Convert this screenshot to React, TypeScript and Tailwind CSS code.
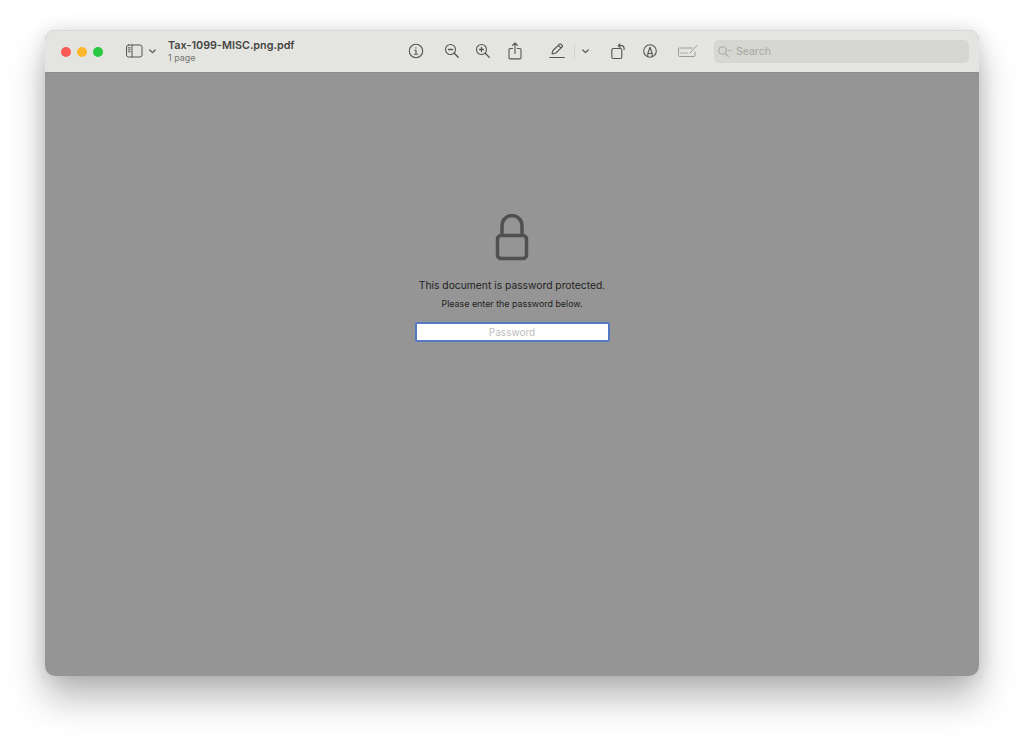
const stroke = { fill: "none", stroke: "currentColor", strokeLinecap: "round" as const, strokeLinejoin: "round" as const };

function Slot({ w, children, className = "" }: { w: string; children?: React.ReactNode; className?: string }) {
  return <div className={`flex shrink-0 items-center justify-center ${w} ${className}`}>{children}</div>;
}

export default function App() {
  return (
    <div className="h-[735px] w-[1024px] overflow-hidden bg-white pl-[45px] pt-[30px] font-['Inter','Liberation_Sans',sans-serif]">
      <div className="flex h-[646px] w-[934px] flex-col overflow-hidden rounded-[10px] bg-[#959595] shadow-[0_22px_36px_rgba(0,0,0,0.28),0_0_18px_rgba(0,0,0,0.12)]">
        <div className="flex h-[43px] shrink-0 items-center border-b border-[#8c8c8a] bg-[#e4e5e0] pl-4 text-[#555553] shadow-[inset_0_1px_0_#d9dad6]">
          <div className="mt-[1px] flex w-[65px] shrink-0 gap-[6px]">
            <span className="h-[10px] w-[10px] rounded-full bg-[#fd5c55]" />
            <span className="h-[10px] w-[10px] rounded-full bg-[#fdb82c]" />
            <span className="h-[10px] w-[10px] rounded-full bg-[#28c840]" />
          </div>
          <Slot w="w-[17px]">
            <svg width="17" height="14" viewBox="0 0 17 14" {...stroke} strokeWidth="1"><rect x="0.500" y="1" width="15.500" height="12" rx="2" /><path d="M6 1v12M2.200 3.800h2M2.200 5.800h2M2.200 7.800h2" /></svg>
          </Slot>
          <Slot w="w-[18px]">
            <svg width="7" height="5" viewBox="0 0 7 5" {...stroke} strokeWidth="1.200"><path d="M0.800 1l2.700 2.700L6.200 1" /></svg>
          </Slot>
          <div className="ml-[7px] flex w-[240px] shrink-0 flex-col">
            <span className="text-[10.8px] font-semibold leading-[14px] text-[#454544]">Tax-1099-MISC.png.pdf</span>
            <span className="text-[9px] leading-[10px] text-[#747472]">1 page</span>
          </div>
          <Slot w="w-[16px]">
            <svg width="16" height="16" viewBox="0 0 16 16" {...stroke} strokeWidth="1.100"><circle cx="8" cy="8" r="6.700" /><path d="M6.800 7.200H8v4M6.400 11.200h3.200" /><circle cx="7.900" cy="4.900" r="0.700" fill="currentColor" stroke="none" /></svg>
          </Slot>
          <Slot w="w-[16px]" className="ml-[20px]">
            <svg width="16" height="16" viewBox="0 0 16 16" {...stroke} strokeWidth="1.100"><circle cx="6.500" cy="6.500" r="5" /><path d="M4.500 6.500h4M10.300 10.300l3.900 3.900" strokeWidth="1.400" /></svg>
          </Slot>
          <Slot w="w-[16px]" className="ml-[15px]">
            <svg width="16" height="16" viewBox="0 0 16 16" {...stroke} strokeWidth="1.100"><circle cx="6.500" cy="6.500" r="5" /><path d="M4.500 6.500h4M6.500 4.500v4M10.300 10.300l3.900 3.900" strokeWidth="1.300" /></svg>
          </Slot>
          <Slot w="w-[14px]" className="ml-[17px]">
            <svg width="14" height="18" viewBox="0 0 14 18" {...stroke} strokeWidth="1.100"><path d="M4.500 6.500H2.200a1.200 1.200 0 0 0-1.200 1.200v8a1.200 1.200 0 0 0 1.200 1.200h9.600a1.200 1.200 0 0 0 1.200-1.200v-8a1.200 1.200 0 0 0-1.200-1.200H9.500" /><path d="M7 11.500V1M4.500 3.400L7 1l2.500 2.400" /></svg>
          </Slot>
          <Slot w="w-[16px]" className="ml-[27px]">
            <svg width="16" height="16" viewBox="0 0 16 16" {...stroke} strokeWidth="1.100"><path d="M3 10.500l1-3L10.500 1.200a1 1 0 0 1 1.400 0l1.300 1.300a1 1 0 0 1 0 1.400L6.800 10l-3.300 1zM9.500 2.500l2.600 2.600" /><path d="M0.800 14.500h14.400" strokeWidth="1.200" /></svg>
          </Slot>
          <div className="ml-[9px] h-[15px] w-px shrink-0 bg-[#d2d3ce]" />
          <Slot w="w-[8px]" className="ml-[6px]">
            <svg width="7" height="5" viewBox="0 0 7 5" {...stroke} strokeWidth="1.200"><path d="M0.800 1l2.700 2.700L6.200 1" /></svg>
          </Slot>
          <Slot w="w-[14px]" className="ml-[22px]">
            <svg width="14" height="17" viewBox="0 0 14 17" {...stroke} strokeWidth="1.100"><rect x="0.800" y="5.500" width="10" height="10" rx="1.400" /><path d="M7.500 2.600h2.800a2.800 2.800 0 0 1 2.800 2.800v1.200M9 0.800L7.200 2.600 9 4.400" /></svg>
          </Slot>
          <Slot w="w-[14px]" className="ml-[18px]">
            <svg width="14" height="14" viewBox="0 0 14 14" {...stroke} strokeWidth="1.100"><circle cx="7" cy="7" r="6.300" /><path d="M4.800 12.500V9.500L7 3.200l2.200 6.300v3M4.800 9.500h4.400" /></svg>
          </Slot>
          <Slot w="w-[20px]" className="ml-[21px] text-[#9b9b99]">
            <svg width="20" height="12" viewBox="0 0 20 12" {...stroke} strokeWidth="1"><path d="M14 3H1.500a1 1 0 0 0-1 1v6.500a1 1 0 0 0 1 1h14.500a1 1 0 0 0 1-1V7" /><path d="M12 8l7-7.500" /><path d="M3 8h0.100M5 8h0.100M7 8h0.100M9 8h0.100" strokeWidth="1.300" /></svg>
          </Slot>
          <div className="ml-[16px] mt-[1px] flex h-[23px] w-[255px] shrink-0 items-center rounded-[5px] bg-[#d6d7d2] pl-[4px] text-[#a5a6a1]">
            <svg width="14" height="11" viewBox="0 0 14 11" {...stroke} strokeWidth="1" className="shrink-0"><circle cx="4.500" cy="4.500" r="3.800" /><path d="M7.300 7.300l2.900 3" strokeWidth="1.200" /><path d="M10.500 4l1.300 1.300L13.100 4" /></svg>
            <span className="ml-[4px] mt-[2px] text-[10.5px] leading-none">Search</span>
          </div>
        </div>
        <div className="flex flex-1 flex-col items-center pt-[141px]">
          <svg width="34" height="47" viewBox="0 0 34 47" fill="none" stroke="#505050" strokeWidth="3.500" strokeLinecap="round" strokeLinejoin="round">
            <rect x="2.500" y="21.500" width="29" height="23" rx="3.500" />
            <path d="M7 21V11.500a10 10 0 0 1 20 0V21" />
          </svg>
          <div className="mt-[17px] text-[10.3px] leading-[14px] text-[#232323]">This document is password protected.</div>
          <div className="mt-[6px] text-[8.9px] leading-[12px] text-[#232323]">Please enter the password below.</div>
          <div className="mt-[12px] flex h-[20px] w-[195px] items-center justify-center rounded-[2px] border-2 border-[#5379c4] bg-white text-[10px] text-[#bdbdbd]">Password</div>
        </div>
      </div>
    </div>
  );
}
